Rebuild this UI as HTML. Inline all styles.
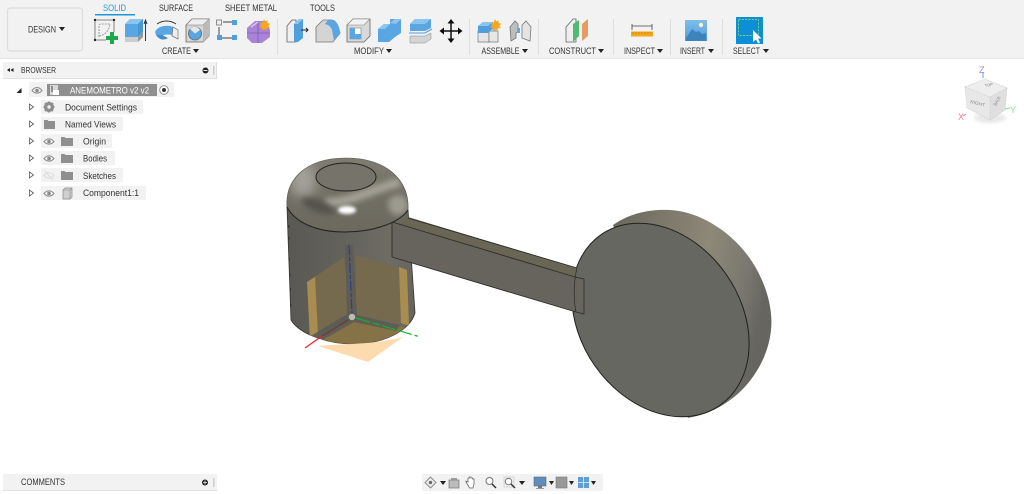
<!DOCTYPE html>
<html><head><meta charset="utf-8"><style>
html,body{margin:0;padding:0;background:#fff;width:1024px;height:494px;overflow:hidden}
svg{display:block;font-family:"Liberation Sans",sans-serif}
text{fill:#333}
</style></head><body>
<svg width="1024" height="494" viewBox="0 0 1024 494" xmlns="http://www.w3.org/2000/svg">
<defs>
<filter id="b1" x="-50%" y="-50%" width="200%" height="200%"><feGaussianBlur stdDeviation="1.500"/></filter>
<filter id="b3" x="-50%" y="-50%" width="200%" height="200%"><feGaussianBlur stdDeviation="3"/></filter>
<filter id="b6" x="-50%" y="-50%" width="200%" height="200%"><feGaussianBlur stdDeviation="6"/></filter>
<filter id="s" x="-10%" y="-10%" width="120%" height="120%"><feGaussianBlur stdDeviation="0.35"/></filter>
<linearGradient id="body" x1="0" x2="1" y1="0" y2="0"><stop offset="0" stop-color="#595853"/><stop offset=".45" stop-color="#63625b"/><stop offset=".8" stop-color="#6e6c63"/><stop offset="1" stop-color="#66645c"/></linearGradient>
<linearGradient id="dome" x1="0" x2="0" y1="0" y2="1"><stop offset="0" stop-color="#7f7c72"/><stop offset=".5" stop-color="#716e63"/><stop offset="1" stop-color="#6c695f"/></linearGradient>
<linearGradient id="back" x1="0" x2="1" y1="0" y2=".3"><stop offset="0" stop-color="#6a675c"/><stop offset=".6" stop-color="#8d8878"/><stop offset=".85" stop-color="#7a7870"/><stop offset="1" stop-color="#66655f"/></linearGradient>
<linearGradient id="blue" x1="0" x2="0" y1="0" y2="1"><stop offset="0" stop-color="#7fbdea"/><stop offset="1" stop-color="#4f9fdd"/></linearGradient>
<clipPath id="domeclip"><path d="M287,207C285,180 305,158 346,158C386,158 410,180 408,210C400,222 375,232 345,232C315,232 295,222 287,207Z"/></clipPath>
<clipPath id="bodyclip"><path d="M287,207L291,320C300,335 330,344 353,344C385,344 410,330 415,313L408,210Z"/></clipPath>
</defs>

<!-- toolbar -->
<rect width="1024" height="58" fill="#f2f2f2"/>
<rect y="58" width="1024" height="1" fill="#e4e4e4"/>

<g filter="url(#s)">
<rect x="7.500" y="8" width="75" height="43" rx="3" fill="#f2f2f2" stroke="#dcdcdc" stroke-width="1.200"/>
<text x="28" y="32.500" font-size="9" textLength="28" lengthAdjust="spacingAndGlyphs">DESIGN</text>
<path d="M59,27h6l-3,4z" fill="#222"/>

<text x="103" y="11" font-size="9" textLength="23" lengthAdjust="spacingAndGlyphs" style="fill:#1f9ad6">SOLID</text>
<rect x="95" y="14" width="40" height="1.500" fill="#1f96d8"/>
<text x="159" y="11" font-size="9" textLength="34" lengthAdjust="spacingAndGlyphs">SURFACE</text>
<text x="225" y="11" font-size="9" textLength="52" lengthAdjust="spacingAndGlyphs">SHEET METAL</text>
<text x="310" y="11" font-size="9" textLength="25" lengthAdjust="spacingAndGlyphs">TOOLS</text>

<!-- sketch -->
<path d="M95,20H114V32M95,20V40H106" fill="none" stroke="#666" stroke-width=".8"/>
<path d="M99,37V26C99,24 100,24 101,24H110M99,36C105,35 109,31 110,24" fill="none" stroke="#888" stroke-width=".8" stroke-dasharray="2 1"/>
<g fill="#222"><circle cx="95" cy="20" r="1.200"/><circle cx="114" cy="20" r="1.200"/><circle cx="95" cy="40" r="1.200"/></g>
<path d="M110,32h4v4h4v4h-4v4h-4v-4h-4v-4h4z" fill="#1ea84b"/>
<!-- extrude -->
<path d="M125,24L130,19H143V32L138,37H125Z" fill="#5aa6e2"/><path d="M125,24L130,19H143L138,24Z" fill="#8cc5ef"/><path d="M138,24V37L143,32V19Z" fill="#4a97d4"/><path d="M125,37H138V42H125Z" fill="#cdcdcd"/><path d="M138,37L143,32V37L138,42Z" fill="#9a9a9a"/>
<path d="M145.500,41V22M144,24l1.500,-4 1.500,4" fill="none" stroke="#222" stroke-width=".9"/>
<!-- revolve -->
<path d="M155,32C157,27 164,25 170,26C174,27 176,28 178,30L177,38C173,34 165,33 160,37L156,35Z" fill="#5aa6e2"/>
<path d="M173,27L178,30V39L172,36Z" fill="#eee" stroke="#777" stroke-width=".7"/>
<path d="M156,35C160,41 165,40 168,38L162,35Z" fill="#3f8fce"/>
<path d="M157,24C163,20 170,20 176,24" fill="none" stroke="#333" stroke-width=".9"/>
<!-- hole -->
<path d="M186,25L192,19H209V36L203,42H186Z" fill="#d6d6d6" stroke="#666" stroke-width=".8"/><path d="M186,25L192,19H209L203,25Z" fill="#eee" stroke="#777" stroke-width=".6"/><path d="M203,25V42L209,36V19Z" fill="#bbb"/>
<circle cx="195" cy="33.500" r="6.500" fill="#5aa6e2" stroke="#666" stroke-width=".8"/><path d="M195,33.500L190,29A6,6 0 0 1 200,30Z" fill="#e8e8e8"/>
<!-- pattern -->
<path d="M219,27V36M223,22H232M222,38H232" stroke="#666" stroke-width="1.200" fill="none"/>
<rect x="216.500" y="20" width="5" height="5" fill="#eee" stroke="#777" stroke-width=".8"/>
<rect x="232" y="20" width="5" height="5" fill="#4f9fdd"/><rect x="217" y="35" width="5" height="5" fill="#4f9fdd"/><rect x="232" y="35" width="5" height="5" fill="#4f9fdd"/>
<!-- purple -->
<path d="M247,28L255,21H266L270,30V37L262,43H252L247,38Z" fill="#a884d8"/><path d="M247,33H270M258,21V43" stroke="#7c59b4" stroke-width=".8"/><path d="M251,27L258,22" stroke="#d6c2ee" stroke-width="1.500"/>
<path d="M264,19l1.300,2.500 2.500,-1.200 -.3,2.800 2.800,.6 -2,2 1.500,2.400 -2.800,0 -.8,2.700 -2,-2 -2.200,1.800 -.2,-2.800 -2.800,-.5 2,-2 -1.400,-2.500 2.800,.2z" fill="#f8a71c"/>
<rect x="277" y="19" width="1" height="36" fill="#dcdcdc"/>

<!-- press pull -->
<path d="M287,26L292,20H296V42H287Z" fill="#eee" stroke="#666" stroke-width=".8"/>
<path d="M294,24L299,19H303V38L298,42H294Z" fill="#4f9fdd"/><path d="M294,24L299,19H303L298,24Z" fill="#8cc5ef"/>
<path d="M301,30H307M306,28l2,2 -2,2" stroke="#222" stroke-width="1" fill="none"/>
<!-- fillet -->
<path d="M316,27L323,20H332C336,23 339,28 340,33L333,42H316Z" fill="#d4d4d4" stroke="#777" stroke-width=".8"/>
<path d="M328,20H334C338,23 340,28 340,34L334,41L332,30C331,27 329,25 325,24Z" fill="#5aa6e2"/>
<!-- shell -->
<path d="M347,25L353,19H370V36L364,42H347Z" fill="#d8d8d8" stroke="#666" stroke-width=".8"/><path d="M353,25H347L353,19H370L364,25Z" fill="#f2f2f2" stroke="#888" stroke-width=".6"/>
<path d="M350,28H361V39H350Z" fill="#fff" stroke="#777" stroke-width=".6"/><path d="M350,28H355V34H361V39H350Z" fill="#5aa6e2"/>
<!-- combine -->
<path d="M378,29L384,24H390V19L396,19H401V33L395,37V37L389,42H378Z" fill="#5aa6e2"/><path d="M390,23L395,19H401L396,24Z" fill="#8cc5ef"/><path d="M378,29L384,24H390L385,29Z" fill="#8cc5ef"/>
<!-- offset -->
<path d="M410,24L415,19H431V28L425,31H410Z" fill="#5aa6e2"/><path d="M410,24L415,19H431L425,24Z" fill="#8cc5ef"/>
<path d="M409,33H425L432,29" stroke="#4f9fdd" stroke-width="1.100" fill="none"/>
<path d="M410,36H425L431,33V39L425,43H410Z" fill="#d4d4d4" stroke="#888" stroke-width=".5"/>
<!-- move -->
<path d="M451,21V41M441,31H461" stroke="#111" stroke-width="1.500"/>
<path d="M451,19l3.500,4.500h-7zM451,43l3.500,-4.500h-7zM439.500,31l4.500,-3.500v7zM462.500,31l-4.500,-3.500v7z" fill="#111"/>
<rect x="469" y="19" width="1" height="36" fill="#dcdcdc"/>

<!-- assemble -->
<path d="M478,31H489V42H478ZM489,31L495,27V37L489,42Z" fill="#e6e6e6" stroke="#777" stroke-width=".7"/><path d="M489,31H498V42H489Z" fill="#e6e6e6" stroke="#777" stroke-width=".7"/>
<path d="M478,26L483,22H493V28L488,33H478Z" fill="#4f9fdd"/><path d="M478,26L483,22H493L488,26Z" fill="#8cc5ef"/>
<path d="M495,19l1.300,2.500 2.500,-1.200 -.3,2.800 2.800,.6 -2,2 1.500,2.400 -2.800,0 -.8,2.700 -2,-2 -2.200,1.800 -.2,-2.800 -2.800,-.5 2,-2 -1.400,-2.500 2.800,.2z" fill="#f8a71c"/>
<!-- joint -->
<path d="M510,27L515,21L518,24V32L516,33V38L511,41Z" fill="#bdbdbd" stroke="#777" stroke-width=".8"/>
<path d="M531,27L526,21L522,25V38L530,41Z" fill="#e4e4e4" stroke="#777" stroke-width=".8"/><rect x="518" y="28" width="2" height="5" fill="#5aa6e2"/>
<rect x="538" y="19" width="1" height="36" fill="#dcdcdc"/>

<!-- construct -->
<path d="M566,27L573,19H576V42H566Z" fill="#eee" stroke="#666" stroke-width=".8"/>
<path d="M573,24L579,20V36L573,42Z" fill="#4fbb72"/>
<path d="M582,24L588,19V36L582,41Z" fill="#e89a62"/>
<rect x="613" y="19" width="1" height="36" fill="#dcdcdc"/>

<!-- inspect -->
<path d="M632,26H652M632,24V30M652,24V30" stroke="#444" stroke-width=".8" fill="none"/>
<rect x="631" y="31.500" width="22" height="5" fill="#f2a81d"/><path d="M633,32v2M636,32v2M639,32v2M642,32v2M645,32v2M648,32v2M651,32v2" stroke="#a06a00" stroke-width=".5"/>
<rect x="670" y="19" width="1" height="36" fill="#dcdcdc"/>

<!-- insert -->
<rect x="685" y="20" width="22" height="21" fill="url(#blue)"/><circle cx="701" cy="25" r="2.200" fill="#fdf3b5"/>
<path d="M686,38L692,29L696,32L699,31L702,34L706,33V41H686Z" fill="#3d84bd"/>
<rect x="722" y="19" width="1" height="36" fill="#dcdcdc"/>

<!-- select -->
<rect x="736" y="17" width="27" height="27" fill="#0f8fd6"/>
<rect x="738.500" y="19.500" width="20" height="16" fill="none" stroke="#7fd37a" stroke-width=".9" stroke-dasharray="2 1.300"/>
<path d="M753,30V42L756,39.500L758,43.500L760,42.500L758,38.500H761.500Z" fill="#fff"/>

<!-- labels -->
<g font-size="8.800">
<text x="162" y="54" textLength="29" lengthAdjust="spacingAndGlyphs">CREATE</text>
<text x="354" y="54" textLength="30" lengthAdjust="spacingAndGlyphs">MODIFY</text>
<text x="481.500" y="54" textLength="38" lengthAdjust="spacingAndGlyphs">ASSEMBLE</text>
<text x="549" y="54" textLength="47" lengthAdjust="spacingAndGlyphs">CONSTRUCT</text>
<text x="624" y="54" textLength="31" lengthAdjust="spacingAndGlyphs">INSPECT</text>
<text x="680" y="54" textLength="25" lengthAdjust="spacingAndGlyphs">INSERT</text>
<text x="733" y="54" textLength="27" lengthAdjust="spacingAndGlyphs">SELECT</text>
</g>
<path d="M193,49h6l-3,4zM386,49h6l-3,4zM522,49h6l-3,4zM598,49h6l-3,4zM657,49h6l-3,4zM708,49h6l-3,4zM763,49h6l-3,4z" fill="#222"/>

<!-- browser header -->
<rect x="3" y="62" width="214" height="16" fill="#f2f2f2"/><rect x="3" y="78" width="214" height="1" fill="#e0e0e0"/>
<rect x="216" y="62" width="1" height="16" fill="#ddd"/>
<path d="M7,70l3,-2v4zM10.500,70l3,-2v4z" fill="#222"/>
<text x="21" y="73" font-size="8.500" textLength="35" lengthAdjust="spacingAndGlyphs">BROWSER</text>
<circle cx="205.500" cy="70.500" r="3" fill="#222"/><rect x="203.500" y="70" width="4" height="1" fill="#eee"/>
<rect x="213" y="66" width="1.500" height="9" fill="#ccc"/>

<!-- tree rows -->
<g fill="#f2f2f2">
<rect x="29" y="82" width="145" height="15"/>
<rect x="41" y="100" width="102" height="14"/>
<rect x="41" y="117" width="82" height="14"/>
<rect x="41" y="134" width="71" height="14"/>
<rect x="41" y="151" width="74" height="14"/>
<rect x="41" y="168" width="82" height="14"/>
<rect x="41" y="186" width="105" height="14"/>
</g>
<rect x="47" y="84" width="110" height="12" fill="#8f8f8f"/>
<path d="M16.500,93L21.500,88V93Z" fill="#222"/>
<!-- arrows -->
<g fill="#fff" stroke="#555" stroke-width=".8">
<path d="M29.500,104V110L33.500,107Z"/><path d="M29.500,121V127L33.500,124Z"/><path d="M29.500,138V144L33.500,141Z"/><path d="M29.500,155V161L33.500,158Z"/><path d="M29.500,172V178L33.500,175Z"/><path d="M29.500,190V196L33.500,193Z"/>
</g>
<!-- eyes -->
<g fill="none" stroke="#8a8a8a" stroke-width="1">
<path d="M32,90.500C35,86.500 39,86.500 42,90.500C39,94 35,94 32,90.500Z"/>
<path d="M44,141.500C47,138 51,138 54,141.500C51,145 47,145 44,141.500Z"/>
<path d="M44,158.500C47,155 51,155 54,158.500C51,162 47,162 44,158.500Z"/>
<path d="M44,193.500C47,190 51,190 54,193.500C51,197 47,197 44,193.500Z"/>
<path d="M44,175.500C47,172 51,172 54,175.500C51,179 47,179 44,175.500ZM45,171L53,180" stroke="#dcdcdc"/>
</g>
<g fill="#8a8a8a"><circle cx="37" cy="90.500" r="1.800"/><circle cx="49" cy="141.500" r="1.800"/><circle cx="49" cy="158.500" r="1.800"/><circle cx="49" cy="193.500" r="1.800"/></g>
<!-- doc icon -->
<rect x="50" y="85" width="8" height="10" fill="#d8d8d8"/><rect x="53" y="90" width="6" height="5" fill="#fff"/><rect x="51" y="86" width="2" height="6" fill="#8f8f8f"/>
<!-- gear -->
<circle cx="49" cy="107" r="3.800" fill="none" stroke="#8d8d8d" stroke-width="2.600"/>
<path d="M49,101.500V112.500M43.500,107H54.500M45,103L53,111M53,103L45,111" stroke="#8d8d8d" stroke-width="1.800"/>
<circle cx="49" cy="107" r="1.700" fill="#f2f2f2"/>
<!-- folders -->
<path d="M44,120H47.500L48.500,121H55V129H44Z" fill="#8f8f8f"/>
<path d="M61,137H64.500L65.500,138H73V146H61Z" fill="#8f8f8f"/>
<path d="M61,154H64.500L65.500,155H73V163H61Z" fill="#8f8f8f"/>
<path d="M61,171H64.500L65.500,172H73V180H61Z" fill="#8f8f8f"/>
<!-- comp -->
<path d="M63,190L65,188H72V197L70,199H63Z" fill="#cfcfcf" stroke="#888" stroke-width=".7"/><path d="M70,190H63M70,190V199M70,190L72,188" stroke="#888" stroke-width=".6" fill="none"/>
<!-- radio -->
<circle cx="164" cy="90" r="4.300" fill="#fff" stroke="#888" stroke-width=".9"/><circle cx="164" cy="90" r="2" fill="#333"/>

<g font-size="9">
<text x="70" y="93.500" textLength="79" lengthAdjust="spacingAndGlyphs" style="fill:#fff">ANEMOMETRO v2 v2</text>
<text x="65" y="110.500" textLength="72" lengthAdjust="spacingAndGlyphs">Document Settings</text>
<text x="65" y="127.500" textLength="51" lengthAdjust="spacingAndGlyphs">Named Views</text>
<text x="83" y="144.500" textLength="23" lengthAdjust="spacingAndGlyphs">Origin</text>
<text x="83" y="161.500" textLength="24" lengthAdjust="spacingAndGlyphs">Bodies</text>
<text x="83" y="179" textLength="33" lengthAdjust="spacingAndGlyphs">Sketches</text>
<text x="83" y="196" textLength="56" lengthAdjust="spacingAndGlyphs">Component1:1</text>
</g>

<!-- comments -->
<rect x="3" y="474" width="214" height="16" fill="#f2f2f2"/><rect x="3" y="490" width="214" height="1" fill="#e0e0e0"/>
<text x="21" y="485" font-size="9" textLength="44" lengthAdjust="spacingAndGlyphs">COMMENTS</text>
<circle cx="205" cy="482.500" r="3" fill="#222"/><path d="M203,482.500h4M205,480.500v4" stroke="#eee" stroke-width=".8"/>
<rect x="213" y="478" width="1.500" height="9" fill="#ccc"/>

<!-- bottom toolbar -->
<rect x="422" y="474" width="181" height="17" fill="#f2f2f2"/>
<g fill="#222"><path d="M440,481h6l-3,4zM519,481h6l-3,4zM549,481h5l-2.500,4zM569,481h5l-2.500,4zM591,481h5l-2.500,4z"/></g>
<path d="M430.500,477L436,482.500L430.500,488L425,482.500Z" fill="#e8e8e8" stroke="#777" stroke-width=".8"/><circle cx="430.500" cy="482.500" r="1.600" fill="#666"/>
<rect x="449" y="480" width="10" height="8" fill="#bbb" stroke="#777" stroke-width=".7"/><rect x="451" y="478" width="6" height="2" fill="#999"/>
<path d="M469,487L466,482V481L468,482V478H469.500V477H471V478H472.500V479H474V484L473,488H469.500Z" fill="#fff" stroke="#666" stroke-width=".8"/>
<circle cx="489.500" cy="481" r="3.500" fill="#fff" stroke="#777"/><path d="M492,484L496,488" stroke="#333" stroke-width="1.500"/>
<rect x="504" y="477" width="10" height="10" fill="none" stroke="#ccc" stroke-width=".7"/><circle cx="508.500" cy="481.500" r="3.300" fill="#fff" stroke="#777"/><path d="M511,484L515,488" stroke="#333" stroke-width="1.500"/>
<rect x="534" y="477" width="12" height="9" fill="#5f8fb8" stroke="#667" stroke-width=".6"/><rect x="538" y="486" width="4" height="2" fill="#777"/><rect x="536" y="488" width="8" height="1" fill="#999"/>
<rect x="556" y="477" width="11" height="11" fill="#999" stroke="#777" stroke-width=".6"/>
<rect x="578" y="477" width="11" height="11" fill="#5f9fd4"/><path d="M583.500,477v11M578,482.500h11" stroke="#e8f0f8" stroke-width=".8"/>
</g>

<!-- MODEL -->
<!-- back of disc -->
<path d="M613,225C630,213 650,209 670,210C705,212 740,238 757,270C768,290 773,312 771,330C767,370 735,410 688,418Z" fill="url(#back)"/>
<!-- disc front -->
<ellipse cx="660.500" cy="320" rx="104" ry="80" transform="rotate(55 660.500 320)" fill="#676761" stroke="#20201e" stroke-width="1"/>

<!-- cylinder body -->
<path d="M287,207L291,320C300,335 330,344 353,344C385,344 410,330 415,313L408,210Z" fill="url(#body)" stroke="#33332f" stroke-width=".8"/>
<g clip-path="url(#bodyclip)">
<path d="M307,282L344,257L350,313L310,340Z" fill="#756a4e"/>
<path d="M307,282L315,277L318,334L310,340Z" fill="#a98c50"/>
<path d="M356,255L407,270L409,326L356,315Z" fill="#756a4e"/>
<path d="M399,267L407,270L409,326L401,323Z" fill="#a98c50"/>
<path d="M352,320L410,328L380,344L320,345L310,338Z" fill="#857347"/>
<path d="M345,245L353,245L357,315L400,325L396,331L354,322L312,346L304,340L347,314Z" fill="#5c5b56" opacity=".9"/>
</g>
<path d="M318,346C335,344 375,345 403,337L368,362Z" fill="#fcdcae"/>
<path d="M349,245L352,314" stroke="#363d80" stroke-width="1.200" stroke-dasharray="10 2 4 2"/>
<path d="M356,318L417,336" stroke="#10b528" stroke-width="1.200" stroke-dasharray="14 3 8 2 14 3"/>
<circle cx="417" cy="336" r=".8" fill="#10b528"/>
<path d="M348,320L322,336" stroke="#6e3a35" stroke-width="1.200"/>
<path d="M322,336L305,348" stroke="#e4222a" stroke-width="1.200"/>
<circle cx="352" cy="317" r="3.200" fill="#bdbdb8"/>
<g fill="#33332f"><rect x="288" y="225" width="1.500" height="2.500"/><rect x="288" y="237" width="1.500" height="2.500"/><rect x="288.500" y="258" width="1.500" height="2.500"/><rect x="289" y="274" width="1.500" height="2.500"/><rect x="289.500" y="288" width="1.500" height="2.500"/><rect x="290" y="304" width="1.500" height="2.500"/></g>

<!-- arm -->
<path d="M392,222L408,217L577,268L575,277Z" fill="#6a6656"/>
<path d="M392,222L575,277L576,312L392,257Z" fill="#66645c"/>
<path d="M392,222L575,277M408,218L577,268M392,257L576,312M392,222V257" stroke="#2c2c28" stroke-width=".9" fill="none"/>
<path d="M575,277L584,279V314L576,312" fill="#66665f" stroke="#2c2c28" stroke-width=".8"/>
<path d="M577,268C574,280 573,298 576,312" fill="none" stroke="#2c2c28" stroke-width=".7"/>

<!-- dome -->
<path d="M287,207C285,180 305,158 346,158C386,158 410,180 408,210C400,222 375,232 345,232C315,232 295,222 287,207Z" fill="url(#dome)"/>
<g clip-path="url(#domeclip)">
<ellipse cx="303" cy="180" rx="13" ry="18" fill="#a3a19a" filter="url(#b6)"/>
<path d="M325,202C345,205 375,188 400,182" stroke="#a5a297" stroke-width="9" fill="none" filter="url(#b3)"/>
<ellipse cx="318" cy="206" rx="18" ry="6" fill="#55534b" filter="url(#b3)" transform="rotate(20 318 206)"/>
<ellipse cx="347" cy="210" rx="9" ry="4" fill="#fff" filter="url(#b1)"/>
<ellipse cx="346" cy="177" rx="30" ry="14" fill="#76736a"/>
<ellipse cx="398" cy="205" rx="10" ry="10" fill="#9d9a90" filter="url(#b3)"/>
</g>
<path d="M287,207C285,180 305,158 346,158C386,158 410,180 408,210" fill="none" stroke="#55534c" stroke-width=".6"/>
<path d="M287,207C295,222 315,232 345,232C375,232 400,222 408,210" fill="none" stroke="#22221f" stroke-width="1"/>
<ellipse cx="346" cy="177" rx="30" ry="14" fill="none" stroke="#22221f" stroke-width="1"/>

<!-- viewcube -->
<g filter="url(#s)">
<ellipse cx="990" cy="118" rx="16" ry="5" fill="#e8e8e8" filter="url(#b1)"/>
<path d="M965,87L985,79L1007,88L1005,110L990,120L967,108Z" fill="#e8e8e8"/>
<path d="M965,87L985,79L1007,88L990,97Z" fill="#eeeeee"/>
<path d="M990,97V120L1005,110L1007,88" fill="#dfdfdf"/>
<path d="M965,87L990,97L1007,88M990,97V120M965,87L985,79L1007,88L1005,110L990,120L967,108Z" fill="none" stroke="#cfcfcf" stroke-width=".7" stroke-dasharray="2 1"/>
<text x="985" y="87" font-size="4" style="fill:#888" transform="rotate(-10 985 87)">TOP</text>
<text x="970" y="103" font-size="4.500" textLength="15" lengthAdjust="spacingAndGlyphs" style="fill:#8a8a8a" transform="rotate(14 970 103)">RIGHT</text>
<text x="996" y="106" font-size="4.500" textLength="10" lengthAdjust="spacingAndGlyphs" style="fill:#8a8a8a" transform="rotate(-60 996 106)">BACK</text>
<path d="M983,72V78" stroke="#8c8cf0" stroke-width="1"/><path d="M966,114L963,116" stroke="#f08080" stroke-width="1"/><path d="M1005,109L1010,108" stroke="#80e090" stroke-width="1"/>
<text x="979" y="73" font-size="9" style="fill:#8c8cf0">Z</text>
<text x="958" y="120" font-size="9" style="fill:#f08080">X</text>
<text x="1010" y="113" font-size="9" style="fill:#80e090">Y</text>
</g>
</svg>
</body></html>
